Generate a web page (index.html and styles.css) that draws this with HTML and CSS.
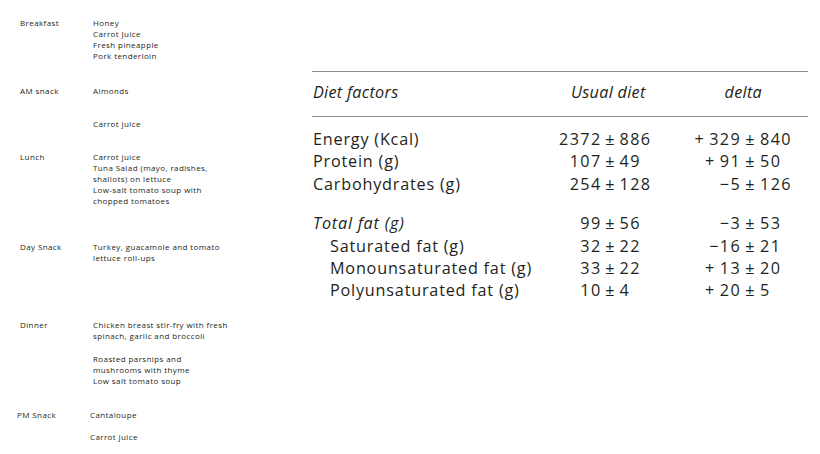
FILE: index.html
```html
<!DOCTYPE html>
<html>
<head>
<meta charset="utf-8">
<link rel="stylesheet" href="styles.css">
</head>
<body>
<div class="page">
  <div class="menu">
    <div class="meal meal-breakfast">
      <div class="label">Breakfast</div>
      <div class="items">
        <div class="group">Honey<br>Carrot Juice<br>Fresh pineapple<br>Pork tenderloin</div>
      </div>
    </div>
    <div class="meal meal-am">
      <div class="label">AM snack</div>
      <div class="items gap-wide">
        <div class="group">Almonds</div>
        <div class="group">Carrot juice</div>
      </div>
    </div>
    <div class="meal meal-lunch">
      <div class="label">Lunch</div>
      <div class="items">
        <div class="group">Carrot juice<br>Tuna Salad (mayo, radishes,<br>shallots) on lettuce<br>Low-salt tomato soup with<br>chopped tomatoes</div>
      </div>
    </div>
    <div class="meal meal-day">
      <div class="label">Day Snack</div>
      <div class="items">
        <div class="group">Turkey, guacamole and tomato<br>lettuce roll-ups</div>
      </div>
    </div>
    <div class="meal meal-dinner">
      <div class="label">Dinner</div>
      <div class="items gap-mid">
        <div class="group">Chicken breast stir-fry with fresh<br>spinach, garlic and broccoli</div>
        <div class="group">Roasted parsnips and<br>mushrooms with thyme<br>Low salt tomato soup</div>
      </div>
    </div>
    <div class="meal meal-pm">
      <div class="label">PM Snack</div>
      <div class="items gap-pm">
        <div class="group">Cantaloupe</div>
        <div class="group">Carrot juice</div>
      </div>
    </div>
  </div>

  <div class="factors">
    <div class="row head">
      <div class="c-name">Diet factors</div>
      <div class="c-usual">Usual diet</div>
      <div class="c-delta">delta</div>
    </div>
    <div class="body">
      <div class="section">
        <div class="row"><div class="c-name">Energy (Kcal)</div><div class="c-usual">2372 ± 886</div><div class="c-delta">+ 329 ± 840</div></div>
        <div class="row"><div class="c-name">Protein (g)</div><div class="c-usual">&#8199;107 ± 49</div><div class="c-delta">+ 91 ± 50&#8199;</div></div>
        <div class="row"><div class="c-name">Carbohydrates (g)</div><div class="c-usual">&#8199;254 ± 128</div><div class="c-delta">−5 ± 126</div></div>
      </div>
      <div class="section">
        <div class="row"><div class="c-name total">Total fat (g)</div><div class="c-usual">&#8199;&#8199;99 ± 56</div><div class="c-delta">−3 ± 53&#8199;</div></div>
        <div class="row"><div class="c-name sub">Saturated fat (g)</div><div class="c-usual">&#8199;&#8199;32 ± 22</div><div class="c-delta">−16 ± 21&#8199;</div></div>
        <div class="row"><div class="c-name sub">Monounsaturated fat (g)</div><div class="c-usual">&#8199;&#8199;33 ± 22</div><div class="c-delta">+ 13 ± 20&#8199;</div></div>
        <div class="row"><div class="c-name sub">Polyunsaturated fat (g)</div><div class="c-usual">&#8199;&#8199;10 ± 4</div><div class="c-delta">+ 20 ± 5&#8199;&#8199;</div></div>
      </div>
    </div>
  </div>
</div>
</body>
</html>
```

FILE: styles.css
```css
* { box-sizing: border-box; }
html, body { margin: 0; padding: 0; background: #ffffff; }
body {
  width: 820px;
  height: 454px;
  overflow: hidden;
  color: #231f20;
  font-family: "Open Sans", "DejaVu Sans", sans-serif;
}
.page {
  display: flex;
  align-items: flex-start;
}

/* left: menu */
.menu {
  width: 312px;
  padding-top: 17px;
  padding-left: 20px;
  font-size: 8px;
  line-height: 11px;
  letter-spacing: 0.4px;
}
.meal {
  display: grid;
  grid-template-columns: 73px 1fr;
}
.items { display: flex; flex-direction: column; }
.gap-wide { gap: 21.5px; }
.gap-mid { gap: 11.5px; }
.gap-pm { gap: 11px; }
.meal-am { margin-top: 24px; }
.meal-lunch { margin-top: 22px; }
.meal-day { margin-top: 35.5px; }
.meal-dinner { margin-top: 56px; }
.meal-pm { margin-top: 23.5px; margin-left: -3px; }

/* right: diet factors table */
.factors {
  width: 496px;
  margin-top: 71px;
  font-size: 16.2px;
  line-height: 22.2px;
  letter-spacing: 0.8px;
}
.row {
  display: grid;
  grid-template-columns: 247px 120px 113px 16px;
}
.c-name { padding-left: 1px; }
.c-usual { letter-spacing: 1.4px; word-spacing: -2px; }
.c-delta { text-align: right; letter-spacing: 1.4px; word-spacing: -1.5px; }
.head {
  border-top: 1.5px solid #8a8a8a;
  border-bottom: 1.5px solid #8a8a8a;
  font-style: italic;
  padding: 9px 0 13px;
}
.head .c-name,
.head .c-usual,
.head .c-delta { letter-spacing: 0.3px; word-spacing: 0; }
.head .c-usual { padding-left: 12px; }
.head .c-delta { padding-right: 30px; }
.body { padding-top: 11px; }
.section + .section { margin-top: 17.5px; }
.total { font-style: italic; }
.sub { padding-left: 18px; }
```
